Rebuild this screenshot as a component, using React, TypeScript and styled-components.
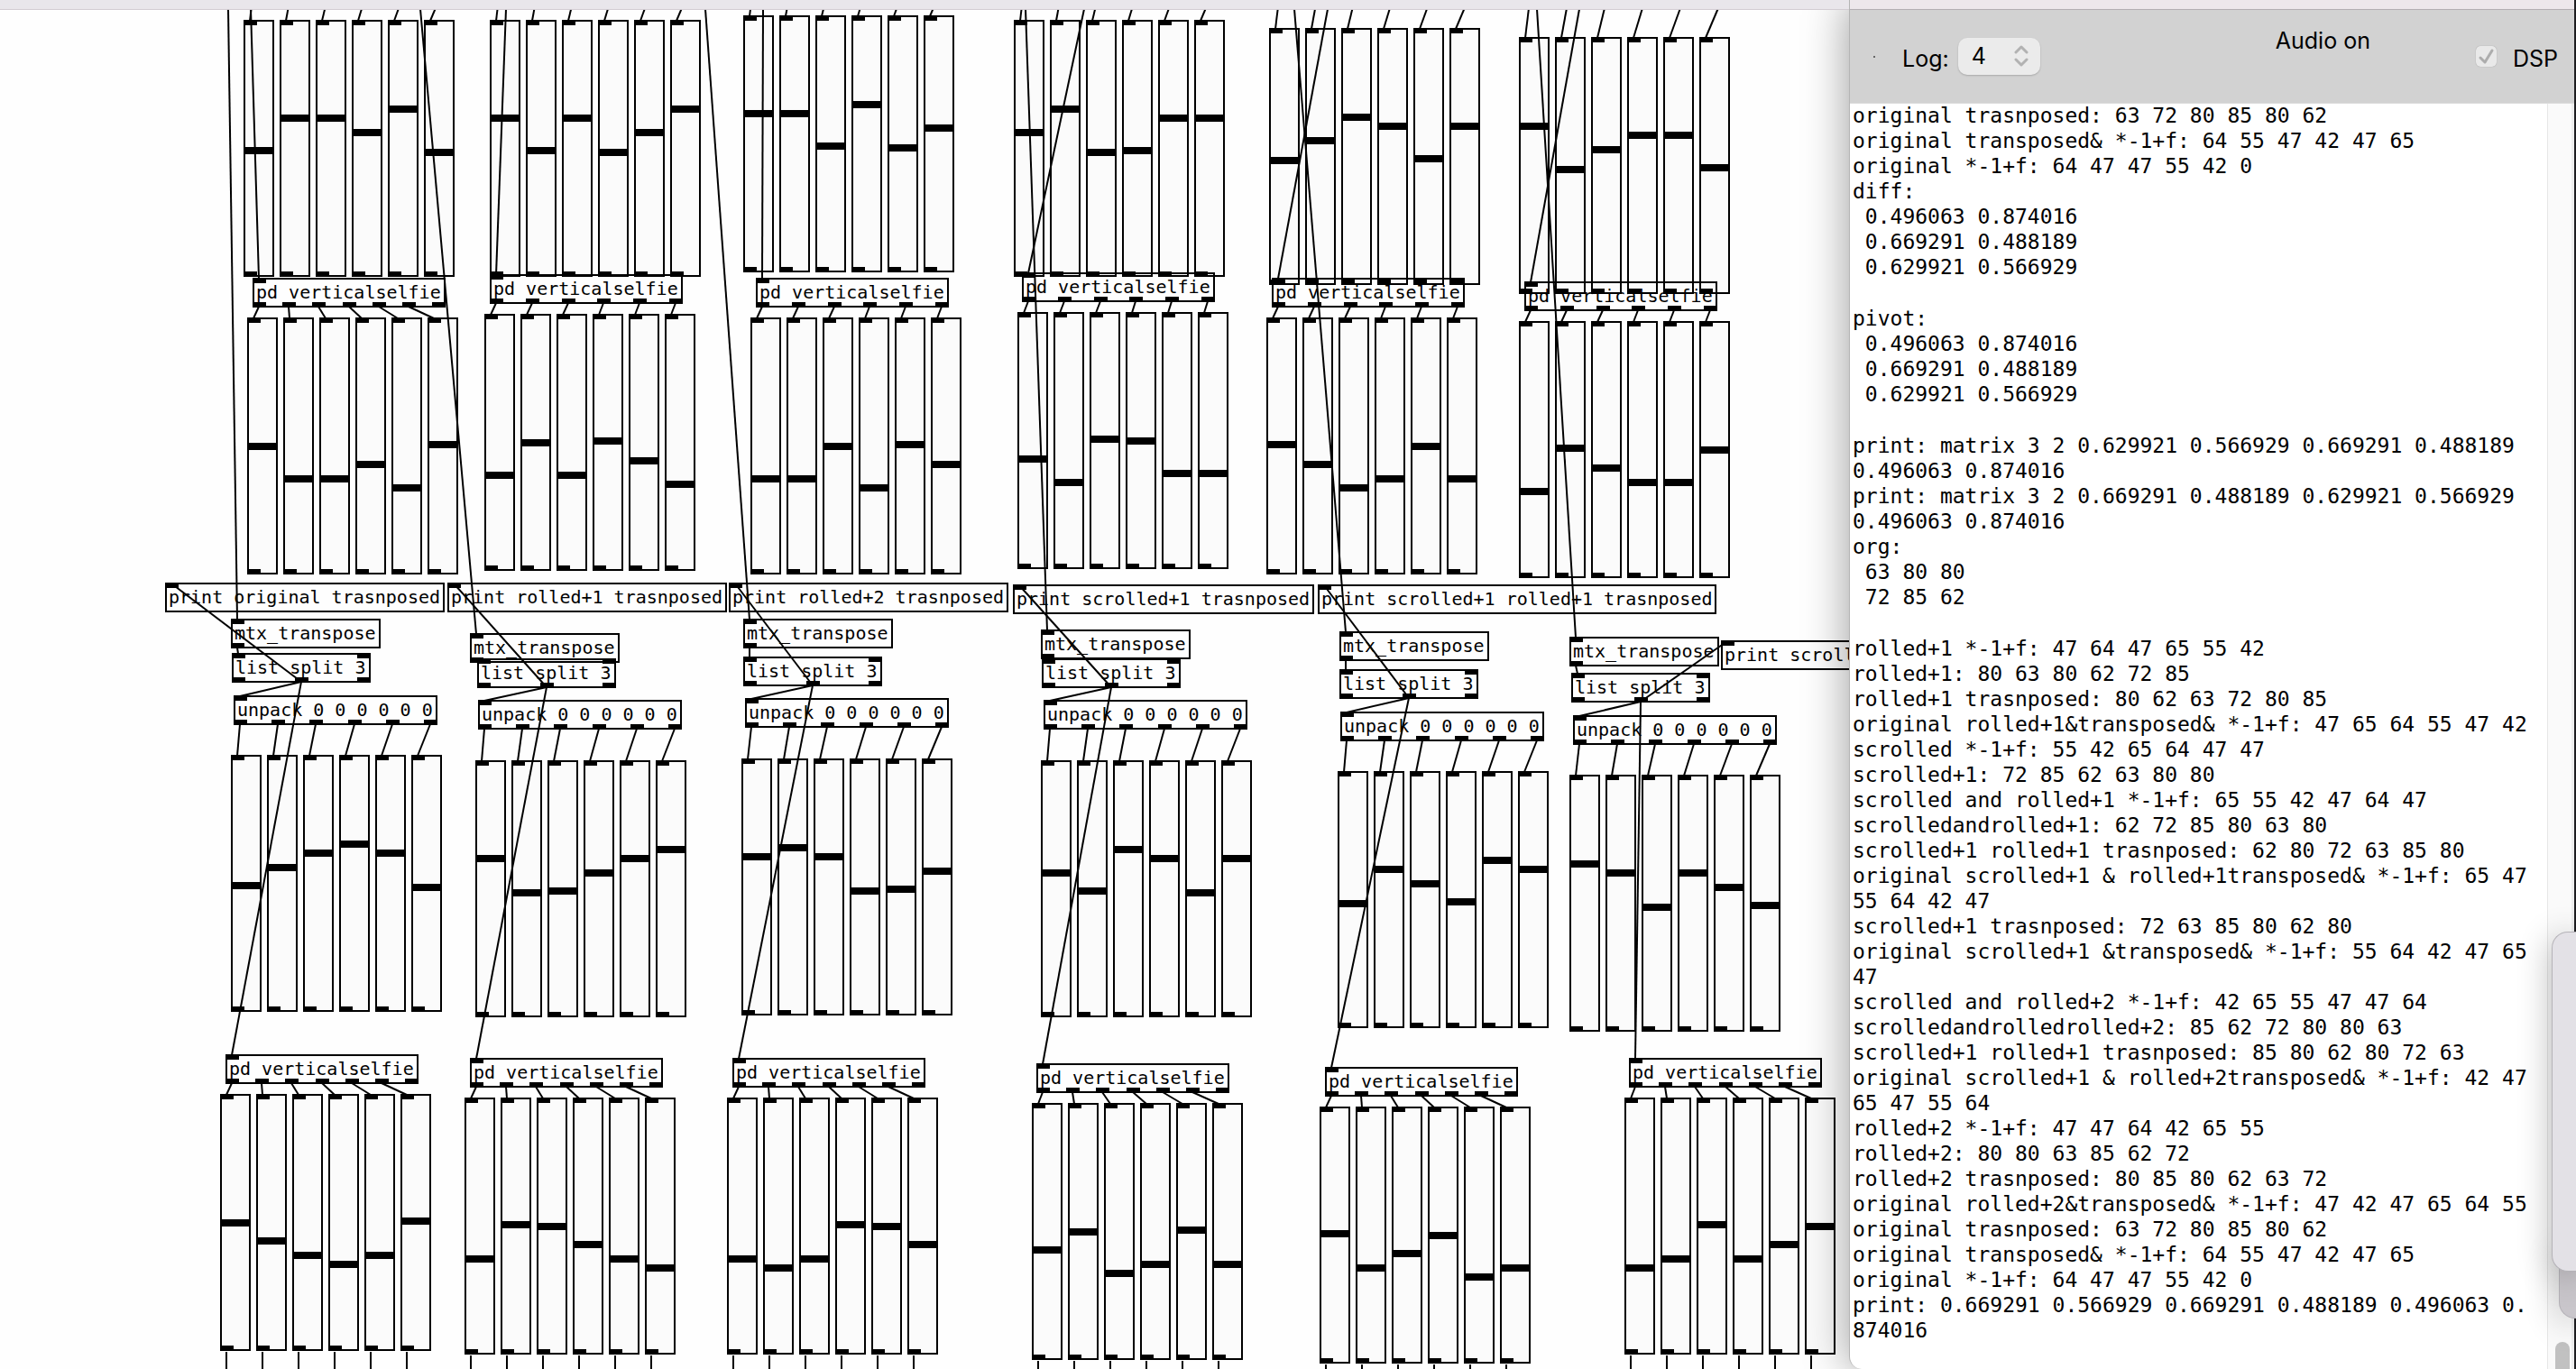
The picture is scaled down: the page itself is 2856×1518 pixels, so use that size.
import React from "react";
import styled, { createGlobalStyle } from "styled-components";

const GlobalStyle = createGlobalStyle`
  html, body { margin: 0; background: #fefefe; }
  * { box-sizing: border-box; }
`;

/* ---------- patch geometry ---------- */

const IOLET = 15;
const SLIDER_W = 34;
const SLIDER_H = 285;
const PITCH = 40;
const BOX_H = 33;
const TITLE_H = 10;

/* distance from the top of a slider to its knob, by value */
const KNOB_TOP: Record<number, number> = {
  85: 94, 80: 104, 72: 120, 63: 140, 62: 142,
  65: 136, 64: 138, 55: 158, 47: 174, 42: 184,
};

type Bank = { x: number; y: number; values: number[] };
type Obj = { x: number; y: number; text: string; ins: number; outs: number };

const bank = (x: number, y: number, ...values: number[]): Bank => ({ x, y, values });
const selfie = (x: number, y: number, outs: number): Obj => ({ x, y, text: "pd verticalselfie", ins: 1, outs });
const print = (x: number, y: number, name: string): Obj => ({ x, y, text: `print ${name}`, ins: 1, outs: 0 });
const transpose = (x: number, y: number): Obj => ({ x, y, text: "mtx_transpose", ins: 1, outs: 1 });
const split = (x: number, y: number): Obj => ({ x, y, text: "list split 3", ins: 2, outs: 3 });
const unpack = (x: number, y: number): Obj => ({ x, y, text: "unpack 0 0 0 0 0 0", ins: 1, outs: 6 });

const sources: Bank[] = [
  bank(270, 22, 63, 80, 80, 72, 85, 62),
  bank(543, 22, 80, 63, 80, 62, 72, 85),
  bank(824, 17, 80, 80, 63, 85, 62, 72),
  bank(1124, 22, 72, 85, 62, 63, 80, 80),
  bank(1407, 31, 62, 72, 85, 80, 63, 80),
  bank(1684, 41, 85, 62, 72, 80, 80, 63),
];
const mirrored: Bank[] = [
  bank(274, 352, 64, 47, 47, 55, 42, 65),
  bank(537, 348, 47, 64, 47, 65, 55, 42),
  bank(832, 352, 47, 47, 64, 42, 65, 55),
  bank(1128, 346, 55, 42, 65, 64, 47, 47),
  bank(1404, 352, 65, 55, 42, 47, 64, 47),
  bank(1684, 356, 42, 65, 55, 47, 47, 64),
];
const transposed: Bank[] = [
  bank(256, 837, 63, 72, 80, 85, 80, 62),
  bank(527, 843, 80, 62, 63, 72, 80, 85),
  bank(822, 841, 80, 85, 80, 62, 63, 72),
  bank(1154, 843, 72, 63, 85, 80, 62, 80),
  bank(1483, 855, 62, 80, 72, 63, 85, 80),
  bank(1740, 859, 85, 80, 62, 80, 72, 63),
];
const flipped: Bank[] = [
  bank(244, 1213, 64, 55, 47, 42, 47, 65),
  bank(515, 1217, 47, 65, 64, 55, 47, 42),
  bank(806, 1217, 47, 42, 47, 65, 64, 55),
  bank(1144, 1223, 55, 64, 42, 47, 65, 47),
  bank(1463, 1227, 65, 47, 55, 64, 42, 47),
  bank(1801, 1217, 42, 47, 65, 47, 55, 64),
];
const topSelfies = [
  selfie(280, 308, 7), selfie(543, 304, 6), selfie(838, 308, 6),
  selfie(1133, 302, 6), selfie(1410, 308, 6), selfie(1690, 312, 6),
];
const lowSelfies = [
  selfie(250, 1169, 7), selfie(521, 1173, 7), selfie(812, 1173, 7),
  selfie(1149, 1179, 7), selfie(1469, 1183, 7), selfie(1806, 1173, 7),
];
const prints = [
  print(183, 646, "original trasnposed"),
  print(496, 646, "rolled+1 trasnposed"),
  print(808, 646, "rolled+2 trasnposed"),
  print(1123, 648, "scrolled+1 trasnposed"),
  print(1461, 648, "scrolled+1 rolled+1 trasnposed"),
  print(1908, 710, "scroll"),
];
const transposes = [
  transpose(256, 686), transpose(521, 702), transpose(824, 686),
  transpose(1154, 698), transpose(1485, 700), transpose(1740, 706),
];
const splits = [
  split(257, 724), split(529, 730), split(824, 728),
  split(1155, 730), split(1485, 742), split(1742, 746),
];
const unpacks = [
  unpack(259, 771), unpack(530, 776), unpack(826, 774),
  unpack(1157, 776), unpack(1486, 789), unpack(1744, 793),
];

/* where the cords that come from above the visible area enter it */
const transposeFeeds = [253, 466, 782, 1137, 1435, 1704];
const selfieFeeds = [278, 561, 846, 1202, 1472, 1751];

const widthOf = (o: Obj) => o.text.length * 12 + 10;
const slot = (o: Obj, count: number, i: number) =>
  count < 2 ? 0 : Math.round(((widthOf(o) - IOLET) * i) / (count - 1));

type Line = [number, number, number, number];
const inlet = (o: Obj): [number, number] => [o.x + 7, o.y + 1];
const outlet = (o: Obj, i: number): [number, number] => [o.x + slot(o, o.outs, i) + 7, o.y + BOX_H - 1];
const knobIn = (b: Bank, i: number): [number, number] => [b.x + i * PITCH + 7, b.y + 1];

const wires: Line[] = [];
for (let c = 0; c < 6; c++) {
  for (let i = 0; i < 6; i++) {
    const [sx, sy] = knobIn(sources[c], i);
    wires.push([sx + 4 + i * 2, sy - 33, sx, sy]);
    wires.push([...outlet(topSelfies[c], i), ...knobIn(mirrored[c], i)]);
    wires.push([...outlet(unpacks[c], i), ...knobIn(transposed[c], i)]);
    wires.push([...outlet(lowSelfies[c], i), ...knobIn(flipped[c], i)]);
    const [fx, fy] = knobIn(flipped[c], i);
    wires.push([fx, fy + SLIDER_H, fx, fy + SLIDER_H + 60]);
  }
  wires.push([transposeFeeds[c], TITLE_H, ...inlet(transposes[c])]);
  wires.push([selfieFeeds[c], TITLE_H, ...inlet(topSelfies[c])]);
  wires.push([...outlet(transposes[c], 0), ...inlet(splits[c])]);
  wires.push([...outlet(splits[c], 1), ...inlet(unpacks[c])]);
  wires.push([...outlet(splits[c], 1), ...inlet(prints[c])]);
  wires.push([...outlet(splits[c], 1), ...inlet(lowSelfies[c])]);
}

/* ---------- patch window ---------- */

const Desktop = styled.div`
  display: flex;
  height: 100vh;
  overflow: hidden;
  position: relative;
`;

const PatchWindow = styled.main`
  flex: 1;
  min-width: 0;
  display: flex;
  flex-direction: column;
  position: relative;
`;

const TitleEdge = styled.div<{ $tone: string; $line: string }>`
  flex: none;
  height: 11px;
  background: ${(p) => p.$tone};
  border-bottom: 1px solid ${(p) => p.$line};
  position: relative;
  z-index: 1;
`;

const Canvas = styled.div`
  position: absolute;
  inset: 0;
  overflow: hidden;
  background: #fefefe;
`;

const BankBox = styled.div`
  position: absolute;
  display: flex;
  gap: ${PITCH - SLIDER_W}px;
`;

const SliderFrame = styled.div`
  position: relative;
  display: flex;
  width: ${SLIDER_W}px;
  height: ${SLIDER_H}px;
  border: 2px solid #000;
  background: #fbfbfb;

  &::before,
  &::after {
    content: "";
    position: absolute;
    left: -2px;
    width: ${IOLET}px;
    height: 6px;
    background: #000;
  }
  &::before { top: -2px; }
  &::after { bottom: -2px; }
`;

const SliderInput = styled.input`
  appearance: none;
  writing-mode: vertical-lr;
  direction: rtl;
  width: 100%;
  height: 100%;
  margin: 0;
  background: transparent;
  outline: none;

  &::-webkit-slider-runnable-track {
    width: 100%;
    height: 100%;
  }
  &::-webkit-slider-thumb {
    appearance: none;
    width: 30px;
    height: 8px;
    background: #000;
    border: 0;
    border-radius: 0;
  }
`;

const ObjectBox = styled.div`
  position: absolute;
  height: ${BOX_H}px;
  padding-left: 2px;
  border: 2px solid #000;
  font: 20px/29px "DejaVu Sans Mono", "Liberation Mono", monospace;
  color: #000;
  white-space: pre;
`;

const Iolet = styled.span<{ $side: "top" | "bottom" }>`
  position: absolute;
  ${(p) => p.$side}: -2px;
  width: ${IOLET}px;
  height: 6px;
  background: #000;
`;

const Wires = styled.svg`
  position: absolute;
  inset: 0;
  width: 100%;
  height: 100%;
  pointer-events: none;
  stroke: #000;
  stroke-width: 2;
`;

function SliderBank({ data, name }: { data: Bank; name: string }) {
  return (
    <BankBox style={{ left: data.x, top: data.y }}>
      {data.values.map((v, i) => (
        <SliderFrame key={i}>
          <SliderInput
            type="range"
            min={0}
            max={SLIDER_H - 12}
            defaultValue={SLIDER_H - 11 - KNOB_TOP[v]}
            aria-label={`${name} ${i + 1}`}
          />
        </SliderFrame>
      ))}
    </BankBox>
  );
}

function PatchObject({ data }: { data: Obj }) {
  return (
    <ObjectBox style={{ left: data.x, top: data.y, width: widthOf(data) }}>
      {data.text}
      {Array.from({ length: data.ins }, (_, i) => (
        <Iolet key={`i${i}`} $side="top" style={{ left: slot(data, data.ins, i) - 2 }} />
      ))}
      {Array.from({ length: data.outs }, (_, i) => (
        <Iolet key={`o${i}`} $side="bottom" style={{ left: slot(data, data.outs, i) - 2 }} />
      ))}
    </ObjectBox>
  );
}

/* ---------- console window ---------- */

const Console = styled.aside`
  flex: none;
  width: 806px;
  display: flex;
  flex-direction: column;
  position: relative;
  background: #fff;
  border-left: 1px solid #b4b4b4;
  border-right: 2px solid #1d1d20;
  border-bottom-left-radius: 14px;
  box-shadow: 0 0 50px rgba(0, 0, 0, 0.4);
`;

const Toolbar = styled.header`
  flex: none;
  display: flex;
  align-items: center;
  height: 104px;
  padding: 0 18px 0 26px;
  background: #d2d2d2;
  border-bottom: 1px solid #dcdcdc;
  font: 25px/30px Inter, "Liberation Sans", sans-serif;
  color: #000;
`;

const Dot = styled.span`
  width: 2px;
  height: 2px;
  background: #666;
`;

const LogLabel = styled.label`
  margin-left: 30px;
  padding-top: 4px;
`;

const SelectWrap = styled.span`
  position: relative;
  display: flex;
  margin-left: 10px;
`;

const LevelSelect = styled.select`
  appearance: none;
  width: 91px;
  height: 41px;
  padding: 0 15px 2px;
  border: 0;
  border-radius: 10px;
  background: #ebebeb;
  box-shadow: 0 1px 2px rgba(0, 0, 0, 0.2);
  color: #000;
  font: inherit;
`;

const Chevrons = styled.svg`
  position: absolute;
  right: 12px;
  top: 8px;
  pointer-events: none;
  fill: none;
  stroke: #b2b2b2;
  stroke-width: 3;
  stroke-linecap: round;
  stroke-linejoin: round;
`;

const AudioState = styled.output`
  margin-left: auto;
  padding-bottom: 36px;
`;

const DspLabel = styled.label`
  display: flex;
  align-items: center;
  gap: 18px;
  margin-left: 117px;
  padding-top: 4px;
`;

const DspBox = styled.input`
  appearance: none;
  width: 23px;
  height: 23px;
  margin: 0 0 4px;
  border-radius: 5px;
  background: #e9e9e9
    url("data:image/svg+xml,%3Csvg xmlns='http://www.w3.org/2000/svg' viewBox='0 0 23 23'%3E%3Cpath d='M5 13l5 5L18 5' fill='none' stroke='%23adadad' stroke-width='3' stroke-linecap='round' stroke-linejoin='round'/%3E%3C/svg%3E");
  box-shadow: 0 0 1px rgba(0, 0, 0, 0.35);
`;

const LogPane = styled.div`
  flex: 1;
  min-height: 0;
  display: flex;
`;

const LogView = styled.div`
  flex: 1;
  min-width: 0;
  margin-top: 3px;
  padding-left: 3px;
  overflow: hidden;
`;

const LogText = styled.div`
  margin-top: -4px;
  font: 23px/28px "DejaVu Sans Mono", "Liberation Mono", monospace;
  color: #000;
  white-space: pre;
`;

const Entry = styled.p`
  margin: 0;
`;

const Blank = styled.div`
  height: 29px;
`;

const ScrollTrack = styled.div`
  flex: none;
  width: 30px;
  display: flex;
  flex-direction: column;
  justify-content: flex-end;
  padding-left: 8px;
  background: #fafafa;
  border-left: 1px solid #e6e6e6;
  border-right: 3px solid #eee;
`;

const ScrollThumb = styled.div`
  width: 16px;
  height: 30px;
  background: #c1c1c1;
  border-radius: 8px 8px 0 0;
`;

const SideWindow = styled.div<{ $top: number; $height: number; $width: number; $tone: string }>`
  position: absolute;
  right: 0;
  top: ${(p) => p.$top}px;
  width: ${(p) => p.$width}px;
  height: ${(p) => p.$height}px;
  background: ${(p) => p.$tone};
  border: 1px solid #b5b3b8;
  border-right: 0;
  border-radius: 18px 0 0 18px;
  box-shadow: 0 6px 36px rgba(0, 0, 0, 0.3);
`;

const log = [
  "original trasnposed: 63 72 80 85 80 62",
  "original transposed& *-1+f: 64 55 47 42 47 65",
  "original *-1+f: 64 47 47 55 42 0",
  "diff:",
  " 0.496063 0.874016",
  " 0.669291 0.488189",
  " 0.629921 0.566929",
  "",
  "pivot:",
  " 0.496063 0.874016",
  " 0.669291 0.488189",
  " 0.629921 0.566929",
  "",
  "print: matrix 3 2 0.629921 0.566929 0.669291 0.488189\n0.496063 0.874016",
  "print: matrix 3 2 0.669291 0.488189 0.629921 0.566929\n0.496063 0.874016",
  "org:",
  " 63 80 80",
  " 72 85 62",
  "",
  "rolled+1 *-1+f: 47 64 47 65 55 42",
  "rolled+1: 80 63 80 62 72 85",
  "rolled+1 trasnposed: 80 62 63 72 80 85",
  "original rolled+1&transposed& *-1+f: 47 65 64 55 47 42",
  "scrolled *-1+f: 55 42 65 64 47 47",
  "scrolled+1: 72 85 62 63 80 80",
  "scrolled and rolled+1 *-1+f: 65 55 42 47 64 47",
  "scrolledandrolled+1: 62 72 85 80 63 80",
  "scrolled+1 rolled+1 trasnposed: 62 80 72 63 85 80",
  "original scrolled+1 & rolled+1transposed& *-1+f: 65 47\n55 64 42 47",
  "scrolled+1 trasnposed: 72 63 85 80 62 80",
  "original scrolled+1 &transposed& *-1+f: 55 64 42 47 65\n47",
  "scrolled and rolled+2 *-1+f: 42 65 55 47 47 64",
  "scrolledandrolledrolled+2: 85 62 72 80 80 63",
  "scrolled+1 rolled+1 trasnposed: 85 80 62 80 72 63",
  "original scrolled+1 & rolled+2transposed& *-1+f: 42 47\n65 47 55 64",
  "rolled+2 *-1+f: 47 47 64 42 65 55",
  "rolled+2: 80 80 63 85 62 72",
  "rolled+2 trasnposed: 80 85 80 62 63 72",
  "original rolled+2&transposed& *-1+f: 47 42 47 65 64 55",
  "original trasnposed: 63 72 80 85 80 62",
  "original transposed& *-1+f: 64 55 47 42 47 65",
  "original *-1+f: 64 47 47 55 42 0",
  "print: 0.669291 0.566929 0.669291 0.488189 0.496063 0.\n874016",
];

export default function App() {
  const banks: [string, Bank[]][] = [
    ["source", sources],
    ["mirrored", mirrored],
    ["transposed", transposed],
    ["flipped", flipped],
  ];
  const objects = [...topSelfies, ...prints, ...transposes, ...splits, ...unpacks, ...lowSelfies];

  return (
    <>
      <GlobalStyle />
      <Desktop>
        <PatchWindow>
          <TitleEdge $tone="#e9e6eb" $line="#d2ccd2" />
          <Canvas>
            {banks.map(([name, row]) =>
              row.map((b, i) => <SliderBank key={`${name}${i}`} name={`${name} ${i + 1}, slider`} data={b} />)
            )}
            {objects.map((o, i) => (
              <PatchObject key={i} data={o} />
            ))}
            <Wires>
              {wires.map(([x1, y1, x2, y2], i) => (
                <line key={i} x1={x1} y1={y1} x2={x2} y2={y2} />
              ))}
            </Wires>
          </Canvas>
        </PatchWindow>

        <Console>
          <TitleEdge $tone="#ede7eb" $line="#b3aeb2" />
          <Toolbar>
            <Dot />
            <LogLabel htmlFor="log-level">Log:</LogLabel>
            <SelectWrap>
              <LevelSelect id="log-level" defaultValue="4">
                <option>0</option>
                <option>1</option>
                <option>2</option>
                <option>3</option>
                <option>4</option>
              </LevelSelect>
              <Chevrons width="17" height="24" viewBox="0 0 17 24">
                <path d="M2 8l6-6 6 6M2 16l6 6 6-6" />
              </Chevrons>
            </SelectWrap>
            <AudioState>Audio on</AudioState>
            <DspLabel>
              <DspBox type="checkbox" defaultChecked />
              DSP
            </DspLabel>
          </Toolbar>
          <LogPane>
            <LogView>
              <LogText>
                {log.map((line, i) => (line ? <Entry key={i}>{line}</Entry> : <Blank key={i} />))}
              </LogText>
            </LogView>
            <ScrollTrack>
              <ScrollThumb />
            </ScrollTrack>
          </LogPane>
        </Console>

        <SideWindow $top={1380} $height={82} $width={19} $tone="#c9c6cb" />
        <SideWindow $top={1033} $height={377} $width={27} $tone="#e3e1e6" />
      </Desktop>
    </>
  );
}
